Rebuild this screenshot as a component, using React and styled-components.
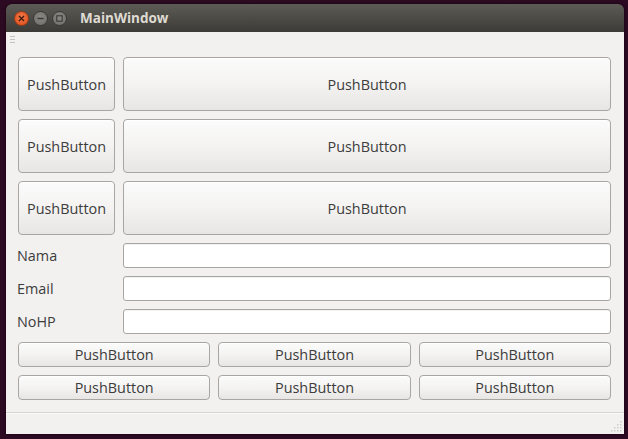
import React from "react";
import styled, { createGlobalStyle } from "styled-components";

const Global = createGlobalStyle`
  html, body { margin: 0; padding: 0; background: #2c0a22; }
  body { font-family: "Open Sans", "DejaVu Sans", sans-serif; }
  #root { width: 628px; height: 439px; }
`;

const Desktop = styled.div`
  width: 628px;
  height: 439px;
  box-sizing: border-box;
  padding: 4px 4px 0 6px;
  background: #2c0a22;
`;

const Window = styled.div`
  width: 618px;
  height: 430px;
  display: flex;
  flex-direction: column;
  border-radius: 6px 6px 0 0;
  overflow: hidden;
  box-shadow: 0 0 3px rgba(0,0,0,0.6);
`;

const TitleBar = styled.div`
  height: 28px;
  flex: none;
  display: flex;
  align-items: center;
  padding-left: 8px;
  background: linear-gradient(#5c5b55, #3c3b37);
  gap: 4px;
`;

const Ctrl = styled.div`
  width: 15px;
  height: 15px;
  border-radius: 50%;
  box-sizing: border-box;
  display: flex;
  align-items: center;
  justify-content: center;
  background: ${(p) =>
    p.$close
      ? "radial-gradient(circle at 50% 40%, #f07a4a, #df4b19)"
      : "radial-gradient(circle at 50% 40%, #8a8883, #6e6c67)"};
  border: 1px solid ${(p) => (p.$close ? "#9e3a14" : "#3a3935")};
`;

const Title = styled.div`
  margin-left: 9px;
  color: #dfdbd2;
  font-family: "Open Sans", "DejaVu Sans", sans-serif;
  font-weight: 700;
  font-size: 13.5px;
`;

const Body = styled.div`
  flex: 1;
  display: flex;
  flex-direction: column;
  background: #f2f1f0;
`;

const ToolStrip = styled.div`
  height: 13px;
  flex: none;
  display: flex;
  flex-direction: column;
  justify-content: center;
  gap: 2px;
  padding-left: 4px;
  padding-top: 1px;
  box-sizing: border-box;
`;

const GripLine = styled.div`
  width: 5px;
  height: 1px;
  background: #c4c1bc;
`;

const Central = styled.div`
  flex: 1;
  padding: 12px 13px 0 12px;
  display: flex;
  flex-direction: column;
  gap: 8px;
`;

const Row = styled.div`
  display: grid;
  grid-template-columns: ${(p) => p.$cols};
  gap: ${(p) => p.$gap || "8px"};
  height: ${(p) => p.$h}px;
`;

const Button = styled.button`
  height: 100%;
  margin: 0;
  padding: 0;
  box-sizing: border-box;
  border: 1px solid #a9a6a1;
  border-radius: 4px;
  background: linear-gradient(#fbfbfb 0%, #f4f3f2 50%, #e7e6e4 100%);
  box-shadow: inset 0 1px 0 #ffffff;
  font-family: "Open Sans", "DejaVu Sans", sans-serif;
  font-size: 14.4px;
  color: #3c3c3c;
  text-align: center;
`;

const Label = styled.div`
  display: flex;
  align-items: center;
  margin-left: -1px;
  font-size: 14.4px;
  color: #3c3c3c;
  font-family: "Open Sans", "DejaVu Sans", sans-serif;
`;

const Input = styled.input`
  height: 100%;
  margin: 0;
  box-sizing: border-box;
  border: 1px solid #a9a6a1;
  border-radius: 3px;
  background: #ffffff;
  box-shadow: inset 0 1px 1px rgba(0,0,0,0.06);
  outline: none;
`;

const StatusBar = styled.div`
  height: 22px;
  flex: none;
  margin-top: 10px;
  border-top: 1px solid #d8d5d0;
  box-shadow: inset 0 1px 0 #fbfbfa;
  display: flex;
  justify-content: flex-end;
  align-items: flex-end;
  padding: 0 2px 2px 0;
  box-sizing: border-box;
`;

const SizeGrip = () => (
  <svg width="11" height="11" viewBox="0 0 11 11">
    {[[9, 1], [6, 4], [9, 4], [3, 7], [6, 7], [9, 7], [0, 10], [3, 10], [6, 10], [9, 10]].map(([x, y], i) => (
      <rect key={i} x={x} y={y - 1} width="1.5" height="1.5" fill="#d0cdc8" />
    ))}
  </svg>
);

export default function App() {
  return (
    <>
      <Global />
      <Desktop>
        <Window>
          <TitleBar>
            <Ctrl $close>
              <svg width="7" height="7" viewBox="0 0 7 7">
                <path d="M1 1 L6 6 M6 1 L1 6" stroke="#3b1a0c" strokeWidth="1.3" />
              </svg>
            </Ctrl>
            <Ctrl>
              <svg width="7" height="7" viewBox="0 0 7 7">
                <path d="M0.5 3.5 H6.5" stroke="#3a3935" strokeWidth="1.3" />
              </svg>
            </Ctrl>
            <Ctrl>
              <svg width="7" height="7" viewBox="0 0 7 7">
                <rect x="0.8" y="0.8" width="5.4" height="5.4" fill="none" stroke="#3a3935" strokeWidth="1.1" />
              </svg>
            </Ctrl>
            <Title>MainWindow</Title>
          </TitleBar>
          <Body>
            <ToolStrip>
              <GripLine />
              <GripLine />
              <GripLine />
            </ToolStrip>
            <Central>
              {[0, 1, 2].map((i) => (
                <Row key={i} $cols="97px 1fr" $h={54}>
                  <Button>PushButton</Button>
                  <Button>PushButton</Button>
                </Row>
              ))}
              {["Nama", "Email", "NoHP"].map((l) => (
                <Row key={l} $cols="97px 1fr" $h={25}>
                  <Label>{l}</Label>
                  <Input />
                </Row>
              ))}
              {[0, 1].map((i) => (
                <Row key={"b" + i} $cols="1fr 1fr 1fr" $h={25}>
                  <Button>PushButton</Button>
                  <Button>PushButton</Button>
                  <Button>PushButton</Button>
                </Row>
              ))}
            </Central>
            <StatusBar>
              <SizeGrip />
            </StatusBar>
          </Body>
        </Window>
      </Desktop>
    </>
  );
}
